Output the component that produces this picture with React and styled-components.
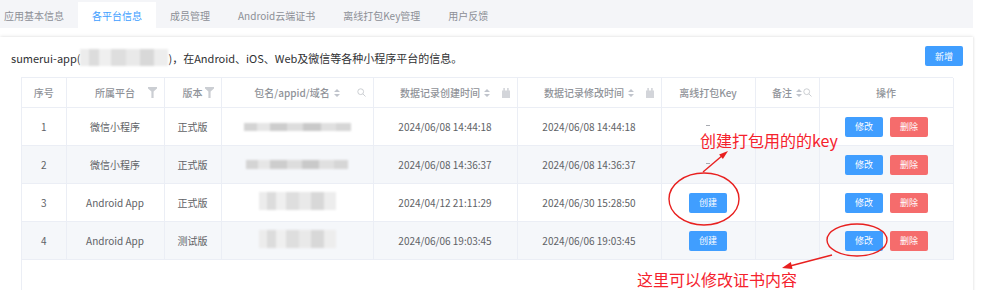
import React from 'react';
import styled, { createGlobalStyle } from 'styled-components';

const GlobalStyle = createGlobalStyle`
    body {
        margin: 0;
        background: #fff;
        font-family: "Noto Sans CJK SC", "Open Sans", sans-serif;
    }
`;

const Page = styled.div`
    position: relative;
    width: 989px;
    height: 290px;
    overflow: hidden;
`;

const TabBar = styled.div`
    display: flex;
    align-items: flex-end;
    width: 973px;
    height: 28px;
    background: #f4f5f8;
    box-sizing: border-box;
    padding-top: 2px;
`;

const Tab = styled.div`
    height: 26px;
    display: flex;
    align-items: center;
    padding: 0 14px;
    font-size: 10px;
    color: ${(p) => (p.$active ? '#409eff' : '#8c8f96')};
    background: ${(p) => (p.$active ? '#fff' : 'transparent')};

    &:first-child {
        padding-left: 4px;
    }
`;

const Panel = styled.div`
    margin-top: 9px;
    width: 973px;
    height: 260px;
    box-sizing: border-box;
    padding: 9px 10px 0 11px;
    background: #fff;
    box-shadow: 0 -1px 3px rgba(0, 0, 0, 0.08), 1px 0 2px rgba(0, 0, 0, 0.05);
`;

const Intro = styled.div`
    display: flex;
    align-items: center;
    justify-content: space-between;
    height: 20px;
`;

const Desc = styled.div`
    display: flex;
    align-items: center;
    font-size: 11px;
    color: #303133;
    padding-top: 3px;
`;

const Mosaic = styled.span`
    display: inline-block;
    width: ${(p) => p.$w}px;
    height: ${(p) => p.$h}px;
    filter: blur(1px);
    background: ${(p) =>
        p.$light
            ? 'linear-gradient(90deg, #ececec 0 10%, #dcdcdc 10% 22%, #efefef 22% 35%, #dedede 35% 52%, #e9e9e9 52% 68%, #d8d8d8 68% 84%, #ededed 84%)'
            : 'linear-gradient(90deg, #d4d4d4 0 12%, #e6e6e6 12% 24%, #cdcdcd 24% 40%, #dddddd 40% 55%, #c9c9c9 55% 72%, #e0e0e0 72% 86%, #d6d6d6 86%)'};
`;

const Button = styled.button`
    border: none;
    border-radius: 2px;
    width: 38px;
    height: 20px;
    padding: 0;
    font-family: inherit;
    font-size: 9px;
    color: #fff;
    background: ${(p) => (p.$danger ? '#f56c6c' : '#409eff')};
`;

const TableWrap = styled.div`
    margin: 11px 10px 0 10px;
    height: 230px;
    border-left: 1px solid #ebeef5;
    border-top: 1px solid #ebeef5;
    box-sizing: border-box;
`;

const Table = styled.table`
    border-collapse: collapse;
    table-layout: fixed;
    width: 931px;
    font-size: 10px;
    color: #606266;

    th, td {
        border-right: 1px solid #ebeef5;
        border-bottom: 1px solid #ebeef5;
        text-align: center;
        padding: 0;
    }

    th {
        height: 29px;
        color: #909399;
        font-weight: 500;
    }
`;

const Row = styled.tr`
    height: 38px;
    background: ${(p) => (p.$striped ? '#f5f7fa' : '#fff')};
`;

const HeadCell = styled.div`
    display: grid;
    grid-template-columns: 1fr auto 1fr;
    align-items: center;
    padding: 0 7px;
`;

const HeadLabel = styled.span`
    display: flex;
    align-items: center;
    gap: 4px;
    white-space: nowrap;
`;

const HeadIcon = styled.span`
    justify-self: end;
    display: flex;
    align-items: center;
`;

const Actions = styled.div`
    display: flex;
    justify-content: center;
    gap: 7px;
    padding-left: 1px;
`;

const Dash = styled.span`
    display: inline-block;
    width: 4px;
    height: 1px;
    background: #a8abb2;
    position: relative;
    top: -5px;
`;

const Overlay = styled.div`
    position: absolute;
    inset: 0;
    pointer-events: none;
`;

const Note = styled.div`
    position: absolute;
    left: ${(p) => p.$x}px;
    top: ${(p) => p.$y}px;
    font-size: 16px;
    line-height: 1;
    color: #f5222d;
    white-space: nowrap;
`;

const Filter = () => (
    <svg width="9" height="11" viewBox="0 0 9 11">
        <path d="M0 0h9v1.6L5.6 4.6V11H3.4V4.6L0 1.6z" fill="#cbced3" />
    </svg>
);

const Sort = () => (
    <svg width="6" height="10" viewBox="0 0 6 10">
        <path d="M0 4L3 1L6 4z M0 6L3 9L6 6z" fill="#c0c4cc" />
    </svg>
);

const Calendar = () => (
    <svg width="8" height="10" viewBox="0 0 8 10">
        <path d="M0 2.5h8V10H0z M1.3 0h1.6v3H1.3z M5.1 0h1.6v3H5.1z" fill="#d3d5da" />
    </svg>
);

const Search = () => (
    <svg width="9" height="9" viewBox="0 0 9 9">
        <circle cx="3.7" cy="3.7" r="2.9" fill="none" stroke="#c6c9ce" strokeWidth="0.9" />
        <path d="M5.8 5.8L8.5 8.5" stroke="#c6c9ce" strokeWidth="0.9" />
    </svg>
);

const tabs = ['应用基本信息', '各平台信息', '成员管理', 'Android云端证书', '离线打包Key管理', '用户反馈'];

const columns = [
    { title: '序号', width: 44 },
    { title: '所属平台', width: 98, icon: <Filter /> },
    { title: '版本', width: 57, icon: <Filter /> },
    { title: '包名/appid/域名', width: 152, sort: true, icon: <Search /> },
    { title: '数据记录创建时间', width: 144, sort: true, icon: <Calendar /> },
    { title: '数据记录修改时间', width: 144, sort: true, icon: <Calendar /> },
    { title: '离线打包Key', width: 94 },
    { title: '备注', width: 64, sort: true, icon: <Search /> },
    { title: '操作', width: 134 },
];

const rows = [
    { no: 1, platform: '微信小程序', version: '正式版', blur: [107, 8], created: '2024/06/08 14:44:18', updated: '2024/06/08 14:44:18' },
    { no: 2, platform: '微信小程序', version: '正式版', blur: [102, 9], created: '2024/06/08 14:36:37', updated: '2024/06/08 14:36:37' },
    { no: 3, platform: 'Android App', version: '正式版', blur: [77, 18], light: true, created: '2024/04/12 21:11:29', updated: '2024/06/30 15:28:50', create: true },
    { no: 4, platform: 'Android App', version: '测试版', blur: [77, 18], light: true, created: '2024/06/06 19:03:45', updated: '2024/06/06 19:03:45', create: true },
];

export default function App() {
    return (
        <Page>
            <GlobalStyle />
            <TabBar>
                {tabs.map((t) => (
                    <Tab key={t} $active={t === '各平台信息'}>
                        {t}
                    </Tab>
                ))}
            </TabBar>
            <Panel>
                <Intro>
                    <Desc>
                        sumerui-app(<Mosaic $w={88} $h={17} $light />)，在Android、iOS、Web及微信等各种小程序平台的信息。
                    </Desc>
                    <Button>新增</Button>
                </Intro>
                <TableWrap>
                    <Table>
                        <colgroup>
                            {columns.map((c) => (
                                <col key={c.title} style={{ width: c.width }} />
                            ))}
                        </colgroup>
                        <thead>
                            <tr>
                                {columns.map((c) => (
                                    <th key={c.title}>
                                        <HeadCell>
                                            <span />
                                            <HeadLabel>
                                                {c.title}
                                                {c.sort && <Sort />}
                                            </HeadLabel>
                                            <HeadIcon>{c.icon}</HeadIcon>
                                        </HeadCell>
                                    </th>
                                ))}
                            </tr>
                        </thead>
                        <tbody>
                            {rows.map((r) => (
                                <Row key={r.no} $striped={r.no % 2 === 0}>
                                    <td>{r.no}</td>
                                    <td>{r.platform}</td>
                                    <td>{r.version}</td>
                                    <td>
                                        <Mosaic $w={r.blur[0]} $h={r.blur[1]} $light={r.light} />
                                    </td>
                                    <td>{r.created}</td>
                                    <td>{r.updated}</td>
                                    <td>{r.create ? <Button>创建</Button> : <Dash />}</td>
                                    <td></td>
                                    <td>
                                        <Actions>
                                            <Button>修改</Button>
                                            <Button $danger>删除</Button>
                                        </Actions>
                                    </td>
                                </Row>
                            ))}
                        </tbody>
                    </Table>
                </TableWrap>
            </Panel>
            <Overlay>
                <svg width="989" height="290" viewBox="0 0 989 290">
                    <ellipse cx="704" cy="199" rx="35" ry="26" fill="none" stroke="#e8201f" strokeWidth="1.4" />
                    <ellipse cx="857" cy="240" rx="30" ry="16" fill="none" stroke="#e8201f" strokeWidth="1.4" />
                    <path d="M703 172L723 155" stroke="#e8201f" strokeWidth="1.4" />
                    <polygon points="728,151 722.9,159 719.1,154.4" fill="#e8201f" />
                    <path d="M832 255L790 266" stroke="#e8201f" strokeWidth="1.4" />
                    <polygon points="782,268 792.6,268.9 790.8,262.1" fill="#e8201f" />
                </svg>
                <Note $x={700} $y={132}>创建打包用的的key</Note>
                <Note $x={637} $y={271}>这里可以修改证书内容</Note>
            </Overlay>
        </Page>
    );
}
